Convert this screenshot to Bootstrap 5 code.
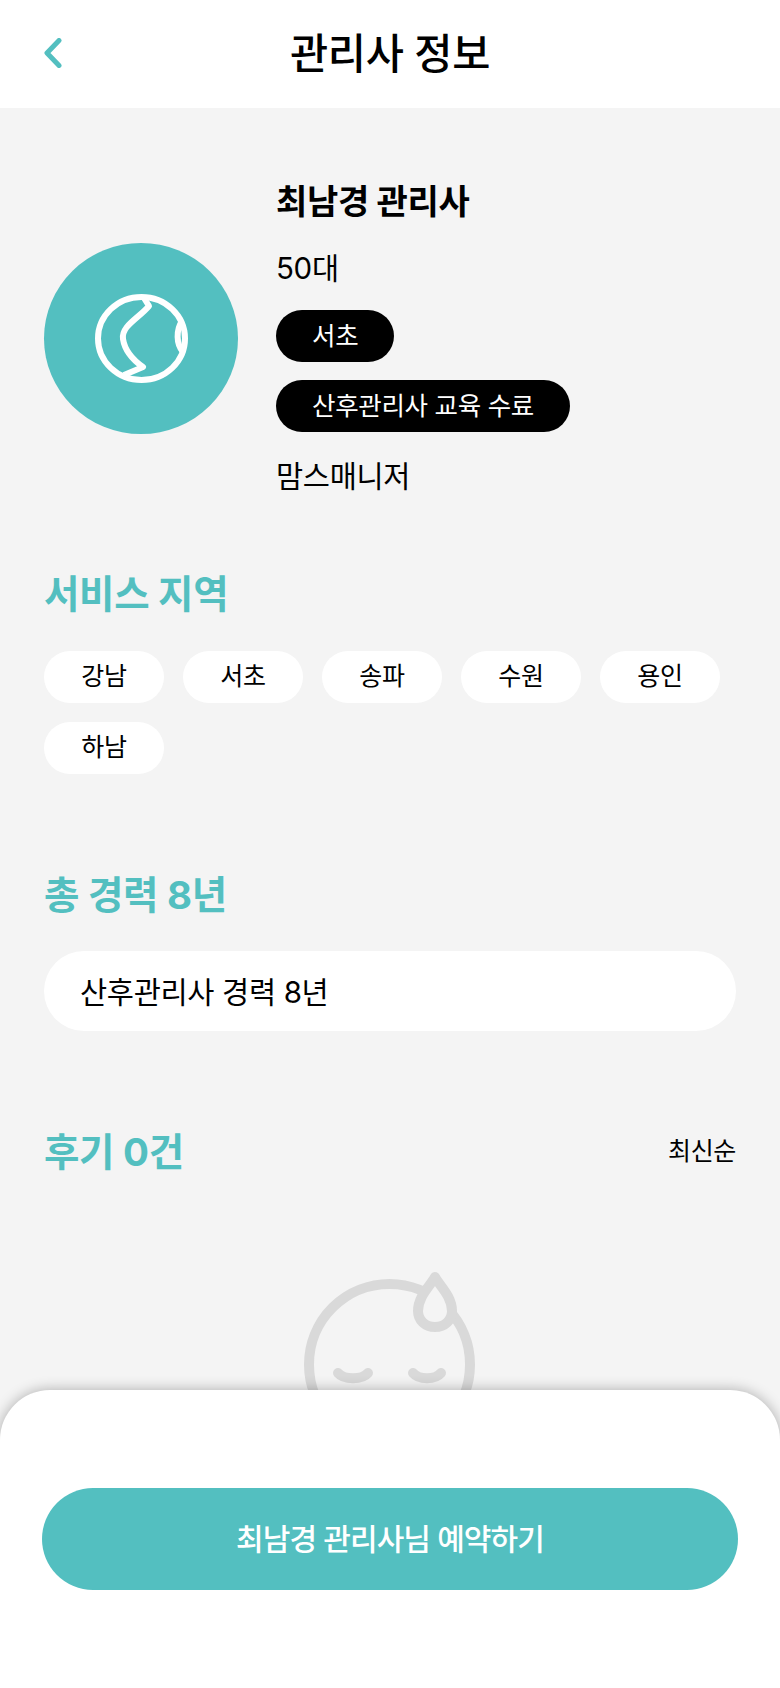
<!DOCTYPE html>
<html lang="ko">
<head>
    <meta charset="UTF-8">
    <meta name="viewport" content="width=device-width, initial-scale=1.0">
    <title>관리사 정보</title>
    <link href="https://cdn.jsdelivr.net/npm/bootstrap@5.3.3/dist/css/bootstrap.min.css" rel="stylesheet">
    <script src="https://cdn.jsdelivr.net/npm/bootstrap@5.3.3/dist/js/bootstrap.bundle.min.js"></script>
    <style>
        html, body {
            height: 1688px;
            overflow: hidden;
        }
        body {
            background: #f4f4f4;
            color: #000;
            font-family: "Inter", "Noto Sans CJK KR", sans-serif;
            letter-spacing: -0.02em;
        }
        .top-head {
            height: 108px;
            background: #fff;
            padding: 2px 44px 0;
        }
        .back-btn {
            left: 44px;
            top: 38px;
            line-height: 0;
        }
        .top-title {
            font-size: 41.5px;
            font-weight: 500;
            line-height: 1;
        }
        .profile-wrap {
            padding: 66px 44px 0;
            gap: 38px;
        }
        .avatar {
            width: 194px;
            height: 191px;
            margin-top: 5px;
            background: #53bfc0;
        }
        .man-name {
            font-size: 34px;
            font-weight: 700;
            line-height: 56px;
            margin-bottom: 15px;
        }
        .man-age, .man-company {
            font-size: 29.5px;
            line-height: 46px;
        }
        .man-age { margin-bottom: 19px; }
        .man-company { margin-top: 21px; margin-bottom: -2px; }
        .black-chip {
            height: 52px;
            padding: 0 36px;
            background: #000;
            color: #fff;
            font-size: 25.5px;
            line-height: 52px;
            border-radius: 26px;
        }
        .chip-stack { gap: 18px; }
        .sec-title {
            color: #53bfc0;
            font-size: 38.5px;
            font-weight: 700;
            line-height: 56px;
        }
        .area-chip {
            width: 120px;
            height: 52px;
            background: #fff;
            font-size: 25px;
            line-height: 50px;
            border-radius: 26px;
            text-align: center;
        }
        .area-list {
            gap: 19px;
            margin-top: 29px;
        }
        .sec-area { padding: 0 44px; margin-top: 69px; }
        .sec-career { padding: 0 44px; margin-top: 93px; }
        .sec-review { padding: 0 44px; margin-top: 93px; }
        .career-box {
            height: 80px;
            background: #fff;
            border-radius: 40px;
            padding: 0 36px;
            font-size: 29.5px;
            line-height: 82px;
            margin-top: 28px;
        }
        .sort-label { font-size: 25px; }
        .empty-face {
            margin-top: 88px;
            line-height: 0;
        }
        .book-sheet {
            left: 0;
            right: 0;
            bottom: 0;
            height: 298px;
            background: #fff;
            border-radius: 50px 50px 0 0;
            box-shadow: 0 0 14px rgba(0, 0, 0, 0.3);
            padding: 98px 42px 0;
        }
        .book-btn {
            height: 102px;
            background: #53bfc0;
            color: #fff;
            border: 0;
            border-radius: 51px;
            font-size: 30px;
            font-weight: 500;
            letter-spacing: -0.03em;
        }
    </style>
</head>
<body>

<header class="top-head position-relative d-flex align-items-center justify-content-center">
    <a href="#" class="back-btn position-absolute">
        <svg width="18" height="30" viewBox="0 0 18 30" fill="none" stroke="#53bfc0" stroke-width="5" stroke-linecap="round" stroke-linejoin="round"><path d="M15 2.5 L3 15 L15 27.5"/></svg>
    </a>
    <div class="top-title">관리사 정보</div>
</header>

<section class="profile-wrap d-flex align-items-center">
    <div class="avatar rounded-circle d-flex align-items-center justify-content-center flex-shrink-0">
        <svg width="93" height="89" viewBox="0 0 93 89" fill="none" stroke="#fff" stroke-width="6" stroke-linejoin="round">
            <ellipse cx="46.5" cy="44.5" rx="43.5" ry="41.5"/>
            <path d="M49 4 L54 12 C44 24 26 32 28 45 C30 58 38 66 48 73 L29 81"/>
            <path d="M87 27 C81 36 81 50 88 58"/>
        </svg>
    </div>
    <div>
        <div class="man-name">최남경 관리사</div>
        <div class="man-age">50대</div>
        <div class="chip-stack d-flex flex-column align-items-start">
            <span class="black-chip">서초</span>
            <span class="black-chip">산후관리사 교육 수료</span>
        </div>
        <div class="man-company">맘스매니저</div>
    </div>
</section>

<section class="sec-area">
    <div class="sec-title">서비스 지역</div>
    <div class="area-list d-flex flex-wrap">
        <span class="area-chip">강남</span>
        <span class="area-chip">서초</span>
        <span class="area-chip">송파</span>
        <span class="area-chip">수원</span>
        <span class="area-chip">용인</span>
        <span class="area-chip">하남</span>
    </div>
</section>

<section class="sec-career">
    <div class="sec-title">총 경력 8년</div>
    <div class="career-box">산후관리사 경력 8년</div>
</section>

<section class="sec-review">
    <div class="d-flex justify-content-between align-items-center">
        <div class="sec-title">후기 0건</div>
        <div class="sort-label">최신순</div>
    </div>
    <div class="empty-face text-center">
        <svg width="180" height="190" viewBox="0 0 180 190" fill="none" stroke="#d9d9d9" stroke-width="10" stroke-linecap="round" stroke-linejoin="round">
            <circle cx="89.5" cy="96.5" r="80.5"/>
            <path d="M135 9 C131 17 118 28 118 43 C118 52 125 59 135 59 C145 59 152 52 152 43 C152 28 139 17 135 9 Z" fill="#f4f4f4"/>
            <path d="M38 105 C44 112 62 112 68 105"/>
            <path d="M113 105 C119 112 135 112 141 105"/>
        </svg>
    </div>
</section>

<div class="book-sheet position-fixed">
    <button type="button" class="book-btn w-100">최남경 관리사님 예약하기</button>
</div>

</body>
</html>
